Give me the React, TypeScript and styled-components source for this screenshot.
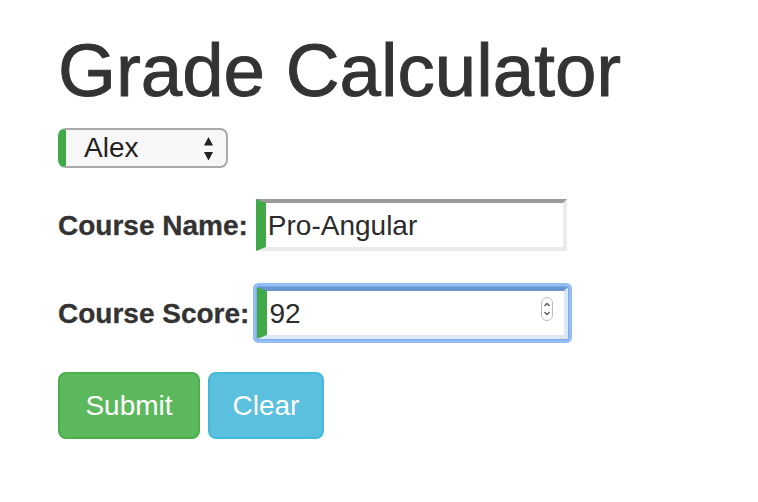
import React from "react";
import styled, { createGlobalStyle } from "styled-components";

const GlobalStyle = createGlobalStyle`
  html, body {
    margin: 0;
    padding: 0;
    background: #ffffff;
  }
  body {
    font-family: "Liberation Sans", Arial, Helvetica, sans-serif;
    color: #333333;
  }
`;

const Page = styled.div`
  padding: 30px 0 0 58px;
  font-family: "Liberation Sans", Arial, Helvetica, sans-serif;
`;

const Title = styled.h1`
  margin: 0 0 17px;
  font-size: 74.5px;
  line-height: 81px;
  font-weight: 400;
  color: #333333;
  -webkit-text-stroke: 0.9px #333333;
`;

const SelectWrap = styled.div`
  position: relative;
  width: 170px;
  height: 40px;
`;

const NativeSelect = styled.select`
  appearance: none;
  -webkit-appearance: none;
  box-sizing: border-box;
  width: 100%;
  height: 100%;
  margin: 0;
  padding: 0 0 0 18px;
  border: 2px solid #a9a9a9;
  border-left: 8px solid #42a948;
  border-radius: 8px;
  background: #f7f7f7;
  font-family: "Liberation Sans", Arial, sans-serif;
  font-size: 28px;
  line-height: 32px;
  color: #222222;
  outline: none;
`;

const SelectArrows = styled.svg`
  position: absolute;
  right: 15px;
  top: 9px;
  pointer-events: none;
`;

const Form = styled.form`
  display: flex;
  flex-direction: column;
  align-items: flex-start;
`;

const Row = styled.div<{ $top: number }>`
  display: flex;
  align-items: baseline;
  gap: 8px;
  margin-top: ${(p) => p.$top}px;
`;

const Label = styled.label`
  font-size: 28px;
  line-height: 32px;
  font-weight: 700;
  color: #333333;
  -webkit-text-stroke: 0.3px #333333;
`;

const Field = styled.div<{ $focused?: boolean }>`
  box-sizing: border-box;
  display: flex;
  align-items: center;
  width: 311px;
  height: 52px;
  padding-top: 2px;
  background: #ffffff;
  border-style: solid;
  border-width: 4px;
  border-left-width: 10px;
  border-left-color: #42a948;
  border-top-color: ${(p) => (p.$focused ? "#6a96d0" : "#9b9b9b")};
  border-right-color: ${(p) => (p.$focused ? "#dde8f6" : "#ebebeb")};
  border-bottom-color: ${(p) => (p.$focused ? "#dde8f6" : "#ebebeb")};
  border-radius: ${(p) => (p.$focused ? "2px" : "0")};
  box-shadow: ${(p) =>
    p.$focused
      ? "0 0 0 1px #7eaaec, 0 0 0 4px rgba(128, 178, 243, 0.85)"
      : "none"};
`;

const TextInput = styled.input`
  flex: 1;
  min-width: 0;
  height: 42px;
  margin: 0;
  padding: 0 2px;
  border: none;
  outline: none;
  background: transparent;
  font-family: "Liberation Sans", Arial, sans-serif;
  font-size: 28px;
  color: #2b2b2b;
`;

const Spinner = styled.svg`
  flex: none;
  align-self: flex-start;
  margin: 4px 11px 0 0;
`;

const Buttons = styled.div`
  display: flex;
  gap: 8px;
  margin-top: 33px;
`;

const Button = styled.button<{ $variant: "success" | "info"; $width: number }>`
  box-sizing: border-box;
  width: ${(p) => p.$width}px;
  height: 67px;
  padding: 0;
  border-radius: 8px;
  border: 2px solid
    ${(p) => (p.$variant === "success" ? "#4cae4c" : "#46b8da")};
  background: ${(p) => (p.$variant === "success" ? "#5cb85c" : "#5bc0de")};
  color: #ffffff;
  font-family: "Liberation Sans", Arial, sans-serif;
  font-size: 28px;
  line-height: 39px;
  text-align: center;
  cursor: pointer;
`;

export default function App() {
  return (
    <>
      <GlobalStyle />
      <Page>
        <Title>Grade Calculator</Title>
        <SelectWrap>
          <NativeSelect defaultValue="Alex">
            <option>Alex</option>
          </NativeSelect>
          <SelectArrows width="9" height="24" viewBox="0 0 9 24">
            <polygon points="4.5,0 9,8.5 0,8.5" fill="#222" />
            <polygon points="0,15 9,15 4.5,23.5" fill="#222" />
          </SelectArrows>
        </SelectWrap>
        <Form onSubmit={(e) => e.preventDefault()}>
          <Row $top={31}>
            <Label>Course Name:</Label>
            <Field>
              <TextInput type="text" defaultValue="Pro-Angular" />
            </Field>
          </Row>
          <Row $top={36}>
            <Label>Course Score:</Label>
            <Field $focused>
              <TextInput type="text" defaultValue="92" />
              <Spinner width="12" height="24" viewBox="0 0 12 24">
                <rect
                  x="0.5"
                  y="0.5"
                  width="11"
                  height="23"
                  rx="5.5"
                  fill="#fff"
                  stroke="#bdbdbd"
                />
                <polyline
                  points="3.5,9 6,6.5 8.5,9"
                  fill="none"
                  stroke="#555"
                  strokeWidth="1.3"
                />
                <polyline
                  points="3.5,15 6,17.5 8.5,15"
                  fill="none"
                  stroke="#555"
                  strokeWidth="1.3"
                />
              </Spinner>
            </Field>
          </Row>
          <Buttons>
            <Button type="submit" $variant="success" $width={142}>
              Submit
            </Button>
            <Button type="button" $variant="info" $width={116}>
              Clear
            </Button>
          </Buttons>
        </Form>
      </Page>
    </>
  );
}
